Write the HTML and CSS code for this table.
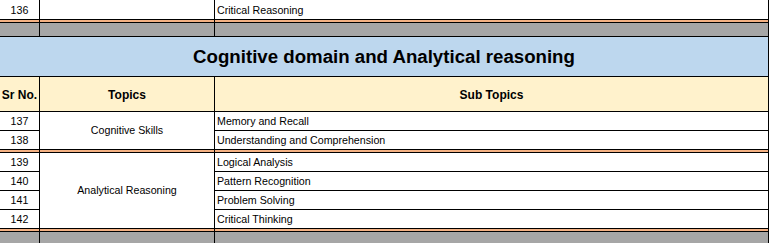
FILE: index.html
```html
<!DOCTYPE html>
<html>
<head>
<meta charset="utf-8">
<link rel="stylesheet" href="styles.css">
</head>
<body>
<div class="sheet">
  <div class="cell num">136</div>
  <div class="cell"></div>
  <div class="cell sub">Critical Reasoning</div>

  <div class="cell gray"></div>
  <div class="cell gray"></div>
  <div class="cell gray"></div>

  <div class="cell title">Cognitive domain and Analytical reasoning</div>

  <div class="cell head">Sr No.</div>
  <div class="cell head">Topics</div>
  <div class="cell head">Sub Topics</div>

  <div class="cell num">137</div>
  <div class="cell topic span2">Cognitive Skills</div>
  <div class="cell sub">Memory and Recall</div>
  <div class="cell num">138</div>
  <div class="cell sub">Understanding and Comprehension</div>

  <div class="cell orange"></div>
  <div class="cell orange"></div>
  <div class="cell orange"></div>

  <div class="cell num">139</div>
  <div class="cell topic span4">Analytical Reasoning</div>
  <div class="cell sub">Logical Analysis</div>
  <div class="cell num">140</div>
  <div class="cell sub">Pattern Recognition</div>
  <div class="cell num">141</div>
  <div class="cell sub">Problem Solving</div>
  <div class="cell num">142</div>
  <div class="cell sub">Critical Thinking</div>

  <div class="cell gray"></div>
  <div class="cell gray"></div>
  <div class="cell gray"></div>
</div>
</body>
</html>
```

FILE: styles.css
```css
html, body {
  margin: 0;
  padding: 0;
  background: #ffffff;
}

.sheet {
  display: grid;
  width: 768px;
  border-right: 1px solid #000;
  background: #000;
  grid-template-columns: 39px 174px 553px;
  grid-template-rows: 19px 16px 39px 34px 18px 18px 2px 18px 18px 18px 18px 15px;
  column-gap: 1px;
  row-gap: 1px;
  font-family: "Liberation Sans", Arial, sans-serif;
  font-size: 10.67px;
  color: #000;
  height: 243px;
  overflow: hidden;
}

.cell {
  background: #fff;
  display: flex;
  align-items: center;
  min-width: 0;
  white-space: nowrap;
  line-height: 1;
}

.num {
  justify-content: center;
  padding-top: 1px;
}

.sub {
  padding-left: 2px;
  padding-top: 1px;
}

.topic {
  justify-content: center;
}

.span2 {
  grid-row: span 2;
}

.span4 {
  grid-row: span 4;
}

.gray {
  background: linear-gradient(#f4b183 0 2px, #000 2px 3px, #a6a6a6 3px);
}

.orange {
  background: #f4b183;
}

.title {
  grid-column: 1 / -1;
  background: #bdd7ee;
  justify-content: center;
  font-weight: bold;
  font-size: 18.67px;
  padding-top: 1px;
}

.head {
  background: #fff2cc;
  justify-content: center;
  font-weight: bold;
  font-size: 12px;
  padding-top: 1px;
}
```
